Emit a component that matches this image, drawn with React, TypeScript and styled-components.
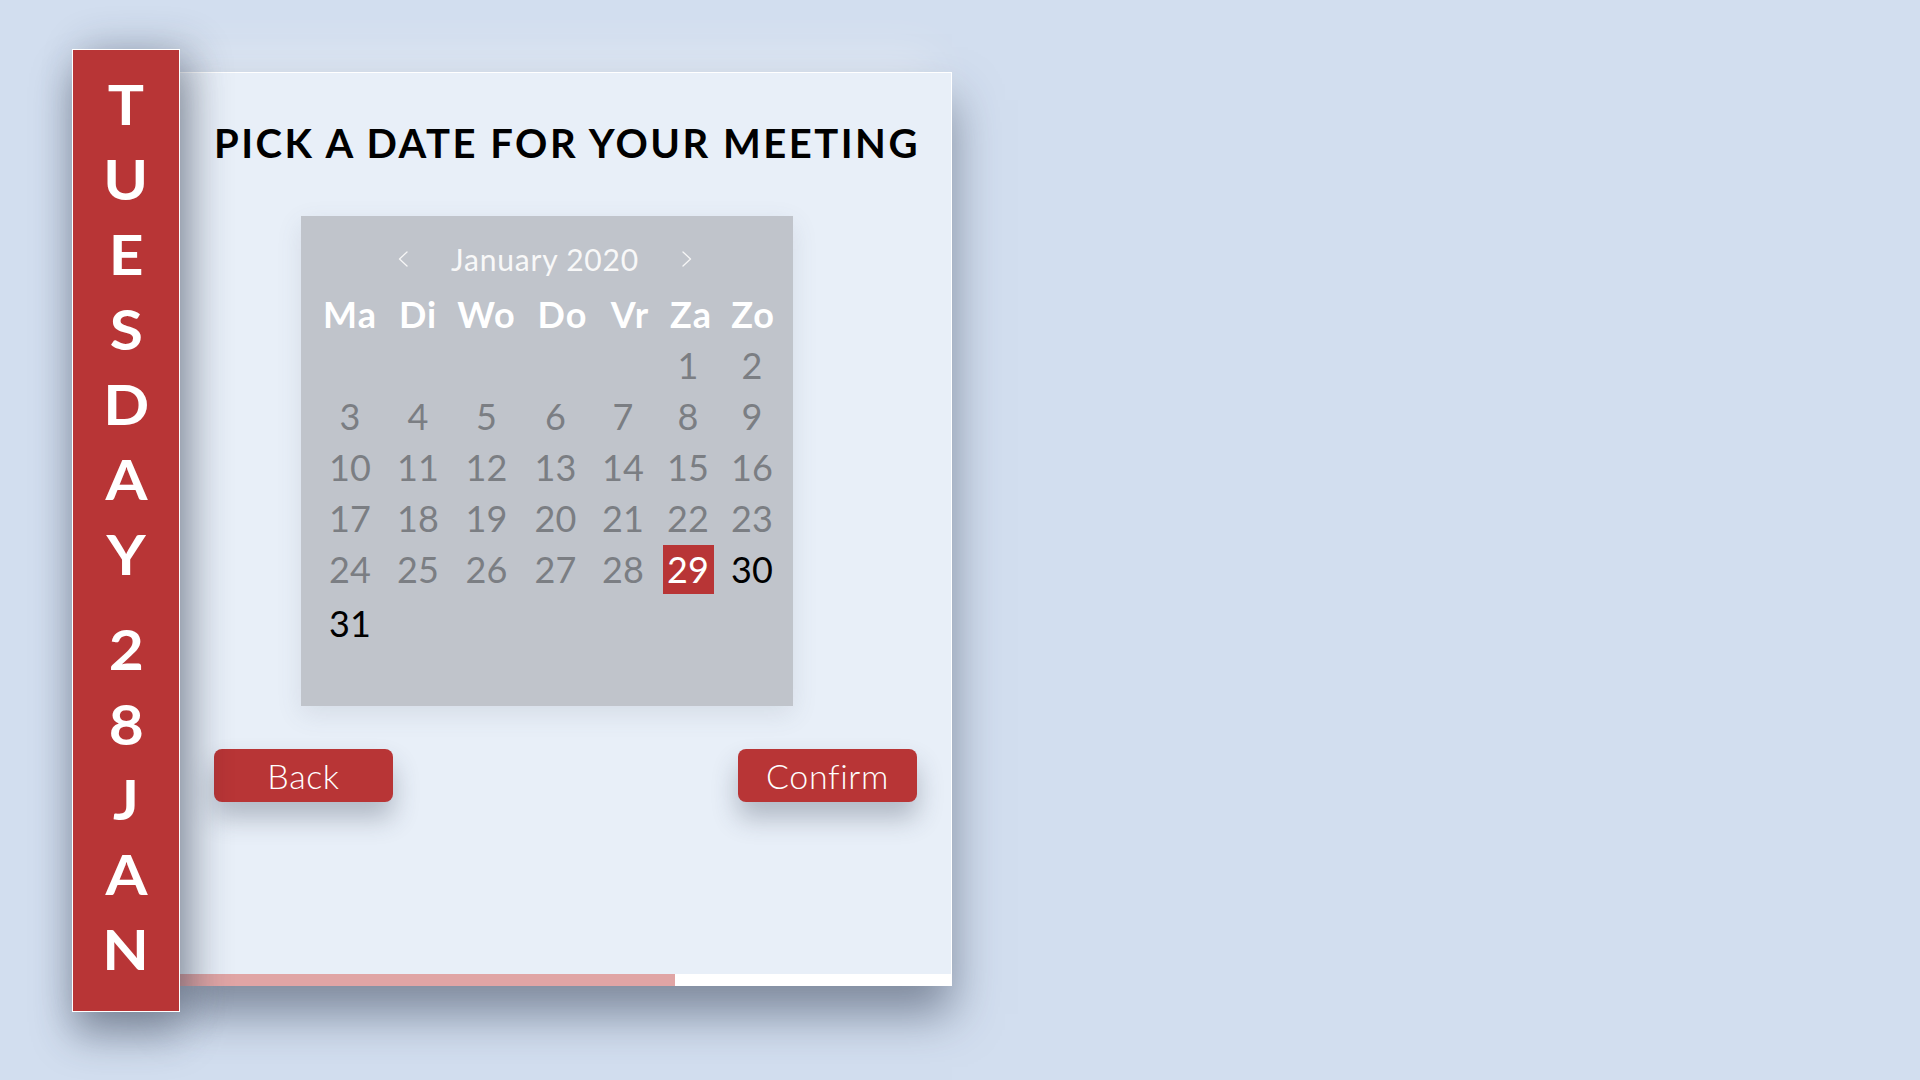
import React from "react";
import styled, { createGlobalStyle } from "styled-components";

const GlobalStyle = createGlobalStyle`
  html, body { margin: 0; padding: 0; }
  body {
    background: #d2deef;
    font-family: Lato, "Noto Sans", sans-serif;
  }
`;

const RED = "#b83536";

const Page = styled.div`
  display: flex;
  align-items: flex-start;
  padding: 49px 0 0 72px;
  min-height: 100vh;
  box-sizing: border-box;
  background: #d2deef;
`;

const Sidebar = styled.div`
  position: relative;
  z-index: 2;
  width: 106px;
  height: 945px;
  padding-top: 16px;
  background: ${RED};
  border: 1px solid #ffffff;
  display: flex;
  flex-direction: column;
  align-items: center;
  box-shadow: 0 24px 40px rgba(40, 50, 70, 0.4), 12px 0 42px rgba(40, 50, 70, 0.3);
`;

const Letter = styled.span`
  display: block;
  height: 75px;
  font: 700 56px/75px Lato, "Noto Sans", sans-serif;
  color: #ffffff;
  text-align: center;
  transform: scaleX(1.08);
`;

const LetterGap = styled.span`
  display: block;
  height: 19.7px;
`;

const Card = styled.section`
  position: relative;
  z-index: 1;
  width: 772px;
  height: 914px;
  margin-top: 23px;
  box-sizing: border-box;
  background: #e8eff8;
  border-top: 1px solid #ffffff;
  border-right: 1px solid #ffffff;
  display: flex;
  flex-direction: column;
  box-shadow: 0 28px 44px rgba(55, 66, 88, 0.55), -18px -18px 44px rgba(255, 255, 255, 0.35);
`;

const CardBody = styled.div`
  flex: 1;
  padding: 46px 34px 0 34px;
`;

const Title = styled.h1`
  margin: 0;
  font: 700 40px/48px Lato, "Noto Sans", sans-serif;
  letter-spacing: 2.5px;
  color: #000000;
  white-space: nowrap;
`;

const Calendar = styled.div`
  width: 492px;
  height: 490px;
  margin: 49px 0 0 87px;
  padding-top: 25px;
  box-sizing: border-box;
  background: #c0c4cb;
  box-shadow: 0 8px 24px rgba(80, 90, 110, 0.12);
`;

const MonthRow = styled.div`
  display: flex;
  justify-content: center;
  align-items: center;
  gap: 43px;
  height: 36px;
  padding-right: 4px;
  font: 400 30px/36px Lato, "Noto Sans", sans-serif;
  letter-spacing: 0.8px;
  color: #f8f8f8;
`;

const NavButton = styled.span`
  display: flex;
  align-items: center;
  width: 10px;
  height: 16px;
`;

const DayGrid = styled.div`
  display: grid;
  grid-template-columns: 68px 68px 69px 69px 66px 64px 64px;
  grid-template-rows: repeat(6, 51px) 54px;
  margin: 12px 0 0 15px;
`;

const DayHead = styled.div<{ $shift: number }>`
  font: 700 36px/51px Lato, "Noto Sans", sans-serif;
  letter-spacing: 1px;
  color: #ffffff;
  text-align: center;
  padding-left: ${(p) => p.$shift * 2}px;
`;

const Day = styled.div<{ $tone: "past" | "future" }>`
  display: flex;
  align-items: flex-end;
  justify-content: center;
  font: 400 36px/51px Lato, "Noto Sans", sans-serif;
  color: ${(p) => (p.$tone === "past" ? "#7b7e83" : "#000000")};
`;

const Selected = styled.span`
  display: block;
  align-self: center;
  width: 51px;
  height: 49px;
  background: ${RED};
  color: #ffffff;
  line-height: 49px;
  text-align: center;
`;

const Actions = styled.div`
  display: flex;
  justify-content: space-between;
  margin-top: 43px;
`;

const ActionButton = styled.button`
  width: 179px;
  height: 53px;
  border: none;
  border-radius: 8px;
  background: ${RED};
  color: #ffffff;
  font: 300 34px/53px Lato, "Noto Sans", sans-serif;
  letter-spacing: 0.6px;
  padding: 0;
  box-shadow: 0 16px 26px rgba(50, 60, 80, 0.3);
  cursor: pointer;
`;

const Progress = styled.div`
  height: 12px;
  background: #ffffff;
  display: flex;
`;

const ProgressFill = styled.div`
  height: 100%;
  background: #e0a5a5;
`;

const Chevron = ({ dir }: { dir: "left" | "right" }) => (
  <svg width="10" height="16" viewBox="0 0 10 16" fill="none">
    <path
      d={dir === "left" ? "M9 1 L1.5 8 L9 15" : "M1 1 L8.5 8 L1 15"}
      stroke="#f6f6f6"
      strokeWidth="1.3"
      strokeLinecap="round"
      strokeLinejoin="round"
    />
  </svg>
);

const weekdays: [string, number][] = [
  ["Ma", 0],
  ["Di", 0],
  ["Wo", 0],
  ["Do", 7],
  ["Vr", 7],
  ["Za", 3],
  ["Zo", 1],
];
const sideText = ["T", "U", "E", "S", "D", "A", "Y", " ", "2", "8", "J", "A", "N"];

export default function App() {
  const cells: React.ReactNode[] = [];
  for (let i = 0; i < 5; i++) cells.push(<Day key={`e${i}`} $tone="past" />);
  for (let d = 1; d <= 31; d++) {
    if (d === 29) {
      cells.push(
        <Day key={d} $tone="future">
          <Selected>{d}</Selected>
        </Day>
      );
    } else {
      cells.push(
        <Day key={d} $tone={d < 29 ? "past" : "future"}>
          {d}
        </Day>
      );
    }
  }

  return (
    <>
      <GlobalStyle />
      <Page>
        <Sidebar>
          {sideText.map((ch, i) =>
            ch === " " ? <LetterGap key={i} /> : <Letter key={i}>{ch}</Letter>
          )}
        </Sidebar>
        <Card>
          <CardBody>
            <Title>PICK A DATE FOR YOUR MEETING</Title>
            <Calendar>
              <MonthRow>
                <NavButton>
                  <Chevron dir="left" />
                </NavButton>
                <span>January 2020</span>
                <NavButton>
                  <Chevron dir="right" />
                </NavButton>
              </MonthRow>
              <DayGrid>
                {weekdays.map(([w, s]) => (
                  <DayHead key={w} $shift={s}>
                    {w}
                  </DayHead>
                ))}
                {cells}
              </DayGrid>
            </Calendar>
            <Actions>
              <ActionButton>Back</ActionButton>
              <ActionButton>Confirm</ActionButton>
            </Actions>
          </CardBody>
          <Progress>
            <ProgressFill style={{ width: `${(496 / 772) * 100}%` }} />
          </Progress>
        </Card>
      </Page>
    </>
  );
}
